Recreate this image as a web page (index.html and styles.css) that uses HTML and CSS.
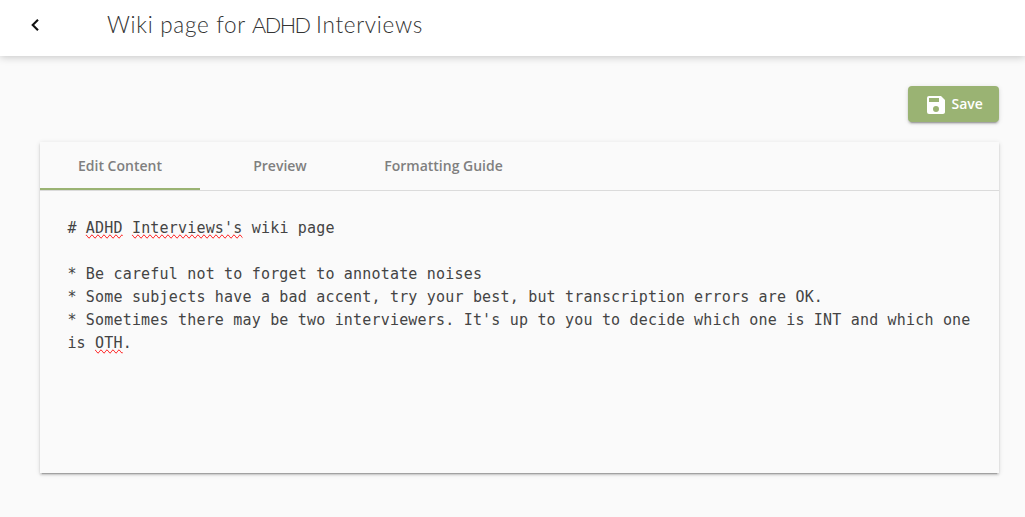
FILE: index.html
```html
<!DOCTYPE html>
<html lang="en">
<head>
<meta charset="utf-8">
<title>Wiki page for ADHD Interviews</title>
<link rel="stylesheet" href="styles.css">
</head>
<body>
<header class="topbar">
  <button class="back" aria-label="Back"><svg width="10" height="14" viewBox="0 0 10 14"><path d="M8 1.700 2.700 7 8 12.300" fill="none" stroke="#111" stroke-width="2.100"/></svg></button>
  <h1 class="title">Wiki page for <span class="caps">ADHD</span> Interviews</h1>
</header>
<main class="content">
  <div class="actions">
    <button class="save"><svg width="24" height="24" viewBox="0 0 24 24"><path fill="#fff" d="M17 3H5a2 2 0 0 0-2 2v14a2 2 0 0 0 2 2h14c1.100 0 2-.9 2-2V7l-4-4zm-5 16a3 3 0 1 1 0-6 3 3 0 0 1 0 6zm3-10H5V5h10v4z"/></svg><span>Save</span></button>
  </div>
  <section class="card">
    <nav class="tabs">
      <a class="tab tab-active">Edit Content</a>
      <a class="tab">Preview</a>
      <a class="tab tab-wide">Formatting Guide</a>
    </nav>
    <div class="editor"># <span class="misspelt">ADHD</span> <span class="misspelt">Interviews's</span> wiki page

* Be careful not to forget to annotate noises
* Some subjects have a bad accent, try your best, but transcription errors are OK.
* Sometimes there may be two interviewers. It's up to you to decide which one is INT and which one is <span class="misspelt">OTH</span>.</div>
  </section>
</main>
</body>
</html>
```
FILE: styles.css
```css
* { box-sizing: border-box; }
body { margin: 0; background: #fafafa; height: 517px; overflow: hidden; color: #444; font-family: "Open Sans", "Noto Sans", sans-serif; }
.topbar { display: flex; align-items: flex-start; height: 56px; background: #fff; box-shadow: 0 1px 8px rgba(0,0,0,.22); }
.back { display: flex; align-items: center; justify-content: center; width: 64px; height: 36px; margin: 6px 0 0 3px; padding: 2px 0 0; border: 0; border-radius: 4px; background: #fff; }
.title { margin: 8px 0 0 40px; font: 300 22.5px/34px Lato, sans-serif; letter-spacing: .7px; color: #333; white-space: nowrap; }
.caps { font-size: 21.7px; letter-spacing: -1.5px; margin: 0 -.3px 0 -.3px; }
.content { padding: 30px 26px 0 40px; }
.actions { display: flex; justify-content: flex-end; }
.save { display: flex; align-items: center; gap: 4px; width: 91px; height: 36px; padding: 0 0 0 15.5px; border: 0; border-radius: 4px; background: #9ab373; color: #fff; font: 600 14px/36px "Open Sans", sans-serif; letter-spacing: -.05px; box-shadow: 0 3px 1px -2px rgba(0,0,0,.2), 0 2px 2px rgba(0,0,0,.14), 0 1px 5px rgba(0,0,0,.12); }
.save svg { margin-top: 2px; }
.card { height: 331px; margin-top: 20px; background: #fafafa; box-shadow: 0 3px 1px -2px rgba(0,0,0,.2), 0 2px 2px rgba(0,0,0,.14), 0 1px 5px rgba(0,0,0,.12); }
.tabs { display: flex; height: 49px; border-bottom: 1px solid #dbdbdb; }
.tab { width: 160px; height: 48px; font: 600 14px/48px "Open Sans", sans-serif; color: #7f7f7f; text-align: center; }
.tab-wide { width: 167px; }
.tab-active { border-bottom: 2px solid #9ab373; }
.editor { padding: 26px 24px 0 27.4px; font: 15px/23px "DejaVu Sans Mono", monospace; letter-spacing: .185px; white-space: pre-wrap; }
.misspelt { text-decoration-line: spelling-error; }
```
